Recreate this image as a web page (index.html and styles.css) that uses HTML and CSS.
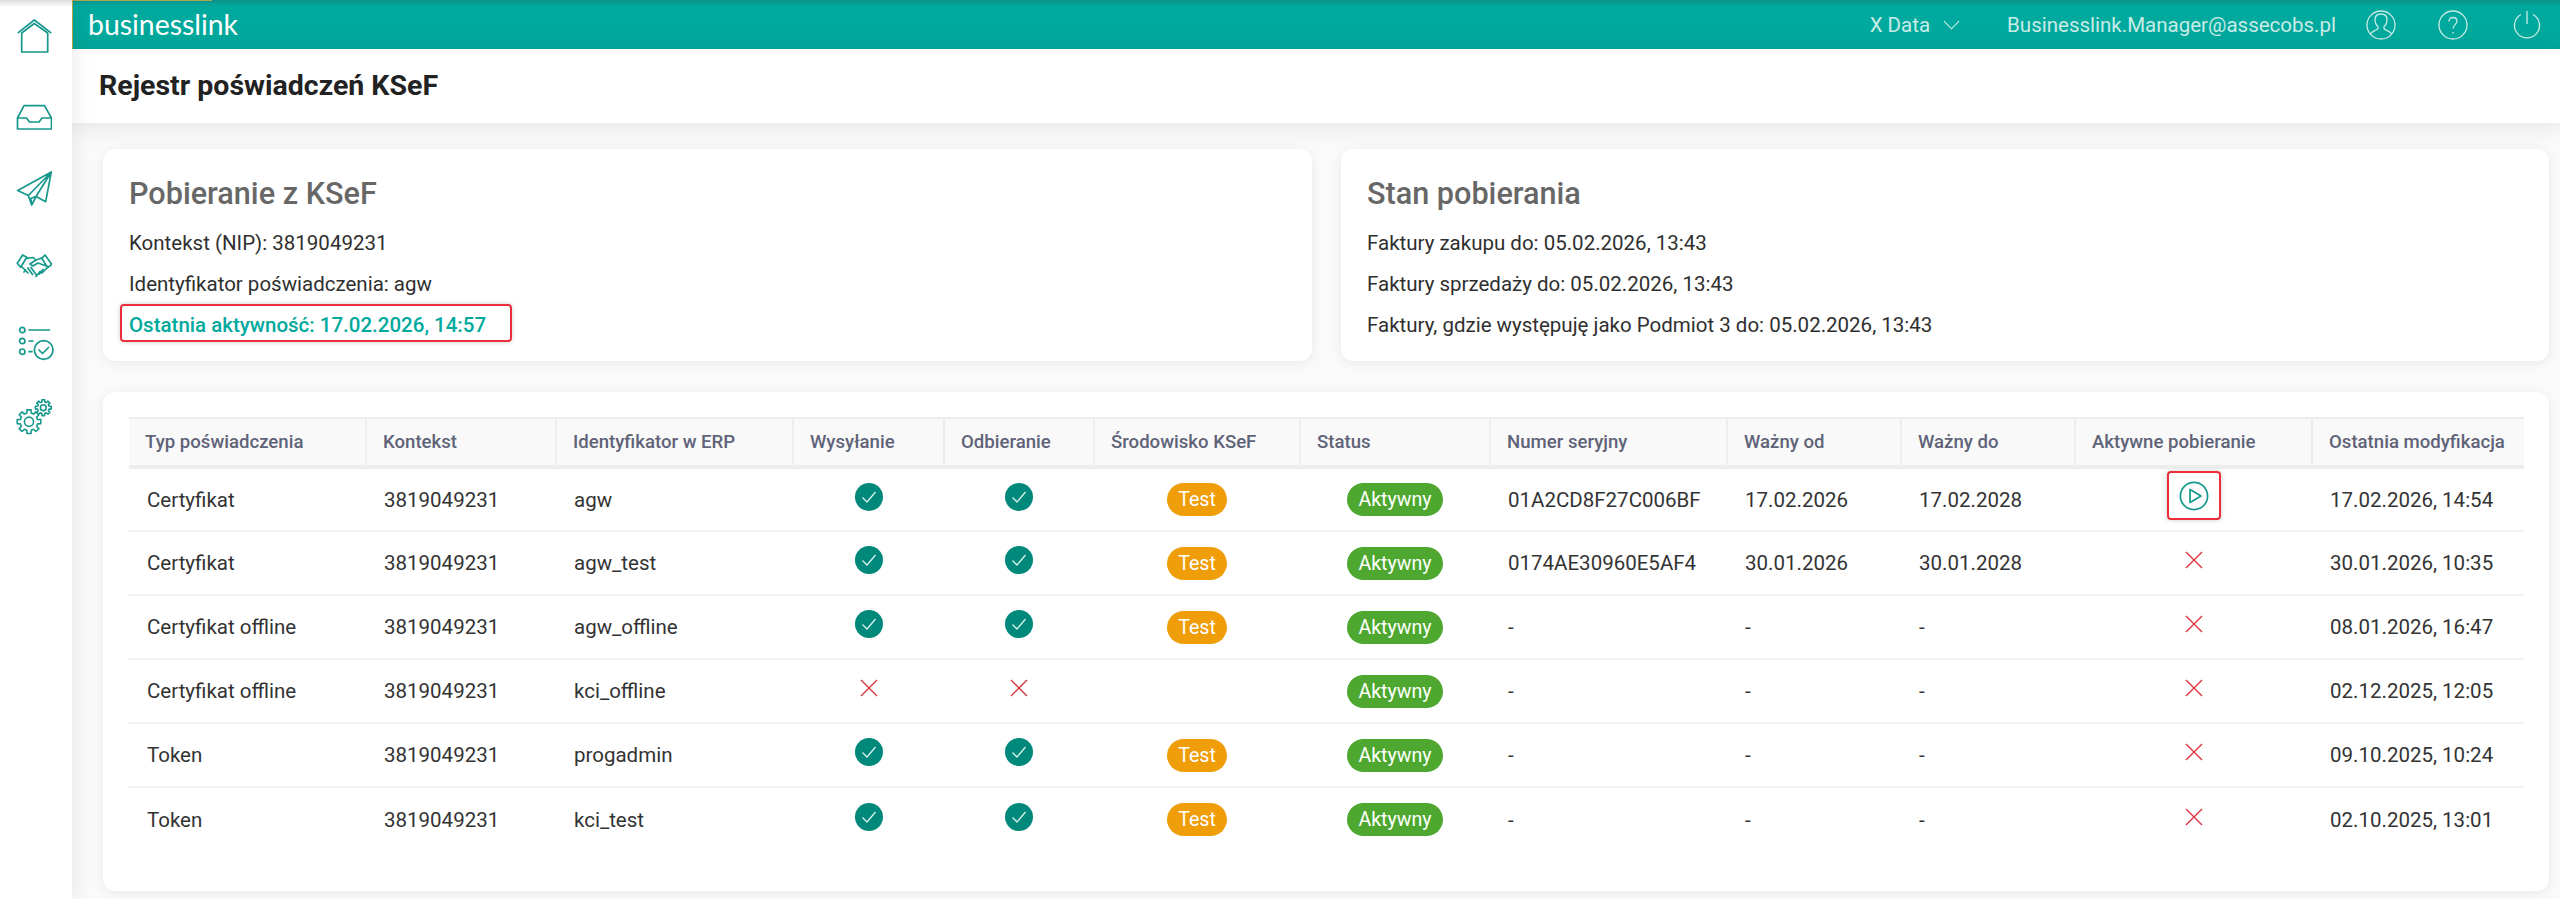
FILE: index.html
```html
<!DOCTYPE html>
<html lang="pl">
<head>
<meta charset="utf-8">
<title>Rejestr poświadczeń KSeF</title>
<link rel="stylesheet" href="styles.css">
</head>
<body>
<svg class="defs" width="0" height="0" aria-hidden="true">
  <defs>
    <path id="gear" d="M98.5-17.4 98.5 17.4 71.8 17.9 63.4 38.1 81.9 57.4 57.4 81.9 38.1 63.4 17.9 71.8 17.4 98.5-17.4 98.5-17.9 71.8-38.1 63.4-57.4 81.9-81.9 57.4-63.4 38.1-71.8 17.9-98.5 17.4-98.5-17.4-71.8-17.9-63.4-38.1-81.9-57.4-57.4-81.9-38.1-63.4-17.9-71.8-17.4-98.5 17.4-98.5 17.9-71.8 38.1-63.4 57.4-81.9 81.9-57.4 63.4-38.1 71.8-17.9z"/>
    <symbol id="ok" viewBox="0 0 28 28"><circle cx="14" cy="14" r="14" fill="#00897b"/><path d="M7.5 14.5l4.5 4.5 8.5-10" fill="none" stroke="#d9f1ee" stroke-width="1.3"/></symbol>
    <symbol id="no" viewBox="0 0 18 18"><path d="M1 1l16 16M17 1 1 17" fill="none" stroke="#d8363f" stroke-width="1.4"/></symbol>
  </defs>
</svg>
<div class="page">
  <nav class="sidebar">
    <svg class="nav-icon" viewBox="0 0 36 36"><path d="M2.3 14.7 18.3 2l16.4 12.7M5.7 15l12.6-9.5L31.7 15v19h-26z"/></svg>
    <svg class="nav-icon" viewBox="0 0 36 36"><path d="M8 6.7 1.5 19v11h34V19L28.5 6.7zM1.5 19h9l3 4H23l3-4h9.5"/></svg>
    <svg class="nav-icon" viewBox="0 0 36 36"><path d="M35.3 1 1.7 19.500l10.600 5zM35.300 1 12.300 24.500l3.400 9.500 4.300-8.500 9.700 5.200zM35.300 1 20 25.500M15.700 34l-.9-6.500 3.500-1.500"/></svg>
    <svg class="nav-icon" viewBox="0 0 36 36"><path d="M1.300 16.300 6.700 8l4 2.300-6 10zM35.700 17.300 29 8l-3.300 3.300 6 9.400zM10.700 11.300l6.600-.8 2.700 2.500 5.700-2M20 13l-6 4 3 2 5-3 9.500 3.500M6 20l6 6M9.500 23l-1.500 2M12 21l4.500 6.500M15 20.500l5 7M23.500 27l3.500-4.500M20 29.500l4-5M31 21l-5 5"/></svg>
    <svg class="nav-icon nav-icon-list" viewBox="0 0 36 36"><circle cx="4.300" cy="5" r="2.700"/><circle cx="4.300" cy="16" r="2.700"/><circle cx="4.300" cy="26.700" r="2.700"/><path d="M11 5h20.500M11 16h4M11 26.700h3"/><circle cx="25.700" cy="25" r="9.300"/><path d="m21 25 3.500 3.500 6-6"/></svg>
    <svg class="nav-icon" viewBox="0 0 36 36">
      <g transform="translate(13 22.700) scale(.12)" stroke-width="13"><use href="#gear"/><circle r="38"/></g>
      <g transform="translate(27.300 8.700) scale(.08)" stroke-width="20"><use href="#gear"/><circle r="36"/></g>
    </svg>
  </nav>
  <div class="main">
    <header class="topbar">
      <div class="logo">businesslink</div>
      <div class="topbar-right">
        <div class="tenant">X Data
          <svg class="chevron" viewBox="0 0 18 10"><path d="M1 1l8 8 8-8"/></svg>
        </div>
        <div class="user">Businesslink.Manager@assecobs.pl</div>
        <svg class="top-icon" viewBox="0 0 30 30"><circle cx="15" cy="15" r="14"/><path d="M4.500 24c1-3 6.500-3.500 7.500-5.500v-2c-2-1.500-3-3.500-3-7C9 6 11.500 4 15 4s6 2 6 5.500c0 3.500-1 5.500-3 7v2c1 2 6.500 2.500 7.500 5.500"/></svg>
        <svg class="top-icon" viewBox="0 0 30 30"><circle cx="15" cy="15" r="14"/><path d="M11 11.500c0-2.500 1.800-4 4-4s4 1.500 4 3.800c0 3-4 3.700-4 7.200M15 22v1.500"/></svg>
        <svg class="top-icon top-icon-last" viewBox="0 0 30 30"><path d="M9 4.500a12.500 12.500 0 1 0 12 0M15 1v13"/></svg>
      </div>
    </header>
    <div class="titlebar"><h1>Rejestr poświadczeń KSeF</h1></div>
    <div class="content">
      <div class="cards">
        <section class="card info">
          <h2>Pobieranie z KSeF</h2>
          <p>Kontekst (NIP): 3819049231</p>
          <p>Identyfikator poświadczenia: agw</p>
          <p class="active"><span class="marked">Ostatnia aktywność: 17.02.2026, 14:57</span></p>
        </section>
        <section class="card info">
          <h2>Stan pobierania</h2>
          <p>Faktury zakupu do: 05.02.2026, 13:43</p>
          <p>Faktury sprzedaży do: 05.02.2026, 13:43</p>
          <p>Faktury, gdzie występuję jako Podmiot 3 do: 05.02.2026, 13:43</p>
        </section>
      </div>
      <section class="card table-card">
        <table>
          <colgroup>
            <col class="w237"><col class="w190"><col class="w237"><col class="w151"><col class="w150"><col class="w206"><col class="w190"><col class="w237"><col class="w174"><col class="w174"><col class="w237"><col class="w212">
          </colgroup>
          <thead>
            <tr><th>Typ poświadczenia</th><th>Kontekst</th><th>Identyfikator w ERP</th><th>Wysyłanie</th><th>Odbieranie</th><th>Środowisko KSeF</th><th>Status</th><th>Numer seryjny</th><th>Ważny od</th><th>Ważny do</th><th>Aktywne pobieranie</th><th>Ostatnia modyfikacja</th></tr>
          </thead>
          <tbody>
            <tr><td>Certyfikat</td><td>3819049231</td><td>agw</td>
              <td class="c"><svg class="ok"><use href="#ok"/></svg></td><td class="c"><svg class="ok"><use href="#ok"/></svg></td>
              <td class="c"><span class="badge test">Test</span></td><td class="c"><span class="badge on">Aktywny</span></td>
              <td>01A2CD8F27C006BF</td><td>17.02.2026</td><td>17.02.2028</td>
              <td class="c"><span class="play-mark"><svg class="play" viewBox="0 0 30 30"><circle cx="15" cy="15" r="13.600"/><path d="M11 8.500v13L22 15z"/></svg></span></td>
              <td>17.02.2026, 14:54</td></tr>
            <tr><td>Certyfikat</td><td>3819049231</td><td>agw_test</td>
              <td class="c"><svg class="ok"><use href="#ok"/></svg></td><td class="c"><svg class="ok"><use href="#ok"/></svg></td>
              <td class="c"><span class="badge test">Test</span></td><td class="c"><span class="badge on">Aktywny</span></td>
              <td>0174AE30960E5AF4</td><td>30.01.2026</td><td>30.01.2028</td>
              <td class="c"><svg class="no"><use href="#no"/></svg></td>
              <td>30.01.2026, 10:35</td></tr>
            <tr><td>Certyfikat offline</td><td>3819049231</td><td>agw_offline</td>
              <td class="c"><svg class="ok"><use href="#ok"/></svg></td><td class="c"><svg class="ok"><use href="#ok"/></svg></td>
              <td class="c"><span class="badge test">Test</span></td><td class="c"><span class="badge on">Aktywny</span></td>
              <td>-</td><td>-</td><td>-</td>
              <td class="c"><svg class="no"><use href="#no"/></svg></td>
              <td>08.01.2026, 16:47</td></tr>
            <tr><td>Certyfikat offline</td><td>3819049231</td><td>kci_offline</td>
              <td class="c"><svg class="no"><use href="#no"/></svg></td><td class="c"><svg class="no"><use href="#no"/></svg></td>
              <td class="c"></td><td class="c"><span class="badge on">Aktywny</span></td>
              <td>-</td><td>-</td><td>-</td>
              <td class="c"><svg class="no"><use href="#no"/></svg></td>
              <td>02.12.2025, 12:05</td></tr>
            <tr><td>Token</td><td>3819049231</td><td>progadmin</td>
              <td class="c"><svg class="ok"><use href="#ok"/></svg></td><td class="c"><svg class="ok"><use href="#ok"/></svg></td>
              <td class="c"><span class="badge test">Test</span></td><td class="c"><span class="badge on">Aktywny</span></td>
              <td>-</td><td>-</td><td>-</td>
              <td class="c"><svg class="no"><use href="#no"/></svg></td>
              <td>09.10.2025, 10:24</td></tr>
            <tr><td>Token</td><td>3819049231</td><td>kci_test</td>
              <td class="c"><svg class="ok"><use href="#ok"/></svg></td><td class="c"><svg class="ok"><use href="#ok"/></svg></td>
              <td class="c"><span class="badge test">Test</span></td><td class="c"><span class="badge on">Aktywny</span></td>
              <td>-</td><td>-</td><td>-</td>
              <td class="c"><svg class="no"><use href="#no"/></svg></td>
              <td>02.10.2025, 13:01</td></tr>
          </tbody>
        </table>
      </section>
    </div>
  </div>
</div>
</body>
</html>
```
FILE: styles.css
```css
* { box-sizing: border-box; }
html, body { margin: 0; height: 100%; overflow: hidden; }
body { font-family: Roboto, "Liberation Sans", sans-serif; font-size: 20.5px; color: #2f2f2f; background: #fafafa; }
.defs { display: block; height: 0; }
.page { display: flex; height: 899px; }

.sidebar {
  width: 72px; flex: none; background: linear-gradient(#dcdcdc 0, #fff 7px);
  display: grid; grid-template-rows: 72px 90px 54px 98px 58px 90px; align-content: start;
  align-items: center; padding-left: 16px; position: relative; z-index: 3;
  box-shadow: 0 0 22px rgba(0,0,0,.1);
}
.nav-icon { width: 36px; height: 36px; fill: none; stroke: #17988c; stroke-width: 1.7; stroke-linejoin: round; stroke-linecap: round; }
.nav-icon-list { margin-left: 2px; }

.main { flex: 1; min-width: 0; display: flex; flex-direction: column; }
.topbar {
  height: 49px; flex: none; display: flex; align-items: center; justify-content: space-between;
  background: linear-gradient(#0d9087 0, #00a99d 6px); color: #c9ece7; padding-left: 15px;
  position: relative; border-left: 1px solid #b8a94a;
}
.topbar::before { content: ""; position: absolute; left: 0; top: 0; width: 139px; height: 1px; background: #a9a857; }
.logo { font-family: Lato, sans-serif; font-size: 28.4px; color: #fff; margin-top: -2px; }
.topbar-right { display: flex; align-items: center; }
.tenant { display: flex; align-items: center; gap: 13px; margin-right: 47px; }
.chevron { width: 17px; height: 10px; fill: none; stroke: #c9ece7; stroke-width: 1.2; }
.top-icon { width: 30px; height: 30px; margin-left: 30px; fill: none; stroke: #c9ece7; stroke-width: 1.3; }
.top-icon + .top-icon { margin-left: 42px; }
.top-icon + .top-icon-last { margin-left: 44px; margin-right: 18px; }

.titlebar { height: 74px; flex: none; background: #fff; display: flex; align-items: center; padding: 0 0 0 27px; position: relative; z-index: 2; box-shadow: 0 2px 26px rgba(0,0,0,.1); }
h1 { margin: 0 0 2px; font-size: 28.5px; font-weight: 700; color: #222; }

.content { flex: 1; padding: 26px 11px 0 31px; }
.cards { display: grid; grid-template-columns: 1209fr 1208fr; gap: 29px; margin-bottom: 31px; }
.card { background: #fff; border-radius: 12px; box-shadow: 0 2px 12px rgba(0,0,0,.07); }
.info { height: 212px; padding: 26px 26px 0; }
h2 { margin: 0 0 10px; font-size: 30.6px; line-height: 38px; font-weight: 500; color: #676767; }
.info p { margin: 0; line-height: 41px; height: 41px; }
.active { color: #00a99d; font-weight: 500; }
.marked { display: inline-block; position: relative; }
.marked::after {
  content: ""; position: absolute; left: -9px; right: -26px; top: -1px; bottom: 4px;
  border: 2px solid #ea2f3b; border-radius: 4px; box-shadow: 0 0 5px rgba(0,0,0,.2);
}

.table-card { height: 499px; padding: 25px 25px 40px 26px; }
table { width: 2395px; table-layout: fixed; border-collapse: collapse; }
.w237 { width: 237px; } .w190 { width: 190px; } .w151 { width: 151px; } .w150 { width: 150px; } .w206 { width: 206px; }
.w174 { width: 174px; } .w212 { width: 212px; }
th {
  height: 49px; padding: 0 0 0 16px; text-align: left; font-size: 18.6px; font-weight: 500; color: #5f6378; white-space: nowrap;
  background: #f9f9f9; border-top: 2px solid #ededed; border-bottom: 4px solid #ededed; border-right: 2px solid #ededed;
}
th:last-child { border-right: 0; }
td { height: 64px; padding: 0 0 0 18px; white-space: nowrap; border-bottom: 2px solid #f2f2f2; color: #333; overflow: hidden; }
tbody tr:last-child td { border-bottom: 0; }
td.c { padding: 0; text-align: center; }
svg.ok { width: 28px; height: 28px; display: block; margin: -6px auto 0; }
svg.no { width: 18px; height: 18px; display: block; margin: -6px auto 0; }
.badge { display: inline-block; height: 33px; line-height: 33px; border-radius: 17px; color: #fff; font-size: 19.6px; vertical-align: middle; }
.test { width: 60px; background: #f09d0a; }
.on { width: 96px; background: #4ea72e; }
.play-mark { display: flex; align-items: center; justify-content: center; width: 54px; height: 49px; margin: -8px auto 0; border: 2px solid #ea2f3b; border-radius: 4px; box-shadow: 0 0 5px rgba(0,0,0,.2); }
.play { width: 30px; height: 30px; fill: none; stroke: #17988c; stroke-width: 1.7; stroke-linejoin: round; }
```
